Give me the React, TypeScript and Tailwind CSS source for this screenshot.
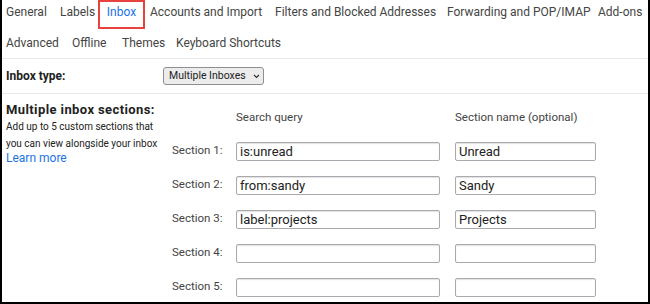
const tabsTop = [
  { t: "General", w: "w-[54px]" },
  { t: "Labels", w: "w-[38px]" },
  { t: "Inbox", w: "" },
  { t: "Accounts and Import", w: "w-[125px] ml-[5px]" },
  { t: "Filters and Blocked Addresses", w: "w-[172px]" },
  { t: "Forwarding and POP/IMAP", w: "w-[151px]" },
  { t: "Add-ons", w: "" },
];
const tabsBottom = [
  { t: "Advanced", w: "w-[66px]" },
  { t: "Offline", w: "w-[50px]" },
  { t: "Themes", w: "w-[54px]" },
  { t: "Keyboard Shortcuts", w: "" },
];

const sections = [
  { q: "is:unread", n: "Unread" },
  { q: "from:sandy", n: "Sandy" },
  { q: "label:projects", n: "Projects" },
  { q: "", n: "" },
  { q: "", n: "" },
];

function Field({ value, className }: { value: string; className: string }) {
  return (
    <div
      className={`h-[19px] border border-[#a9a9b0] rounded-[2px] shadow-[inset_0_1px_1px_rgba(0,0,0,0.12)] bg-white pl-[3px] text-[13px] leading-[17px] text-[#222] whitespace-nowrap ${className}`}
    >
      {value}
    </div>
  );
}

export default function App() {
  return (
    <div
      className="w-[650px] h-[304px] bg-white overflow-hidden border-l-2 border-r-2 border-b-2 border-black text-[#444]"
      style={{ fontFamily: "Roboto, 'Noto Sans', sans-serif" }}
    >
      <div className="flex items-center h-[24px] pl-[4px] text-[12px] whitespace-nowrap">
        {tabsTop.map(({ t, w }) =>
          t === "Inbox" ? (
            <div key={t} className="relative w-[47px] text-center text-[#1a73e8]">
              {t}
              <span className="absolute left-0 right-0 -top-[3px] -bottom-[8px] border-2 border-[#e8423f]" />
            </div>
          ) : (
            <div key={t} className={w}>
              {t}
            </div>
          )
        )}
      </div>
      <div className="flex items-center h-[30px] mt-[4px] pl-[4px] text-[12px] whitespace-nowrap">
        {tabsBottom.map(({ t, w }) => (
          <div key={t} className={w}>
            {t}
          </div>
        ))}
      </div>
      <div className="border-t border-[#e8e8e8] flex items-center h-[35px] pl-[4px]">
        <div className="w-[157px] font-bold text-[12px] text-[#222]">Inbox type:</div>
        <div className="h-[18px] w-[101px] pl-[5px] border border-[#8e8e93] rounded-[3px] bg-[#ececec] flex items-center gap-[7px] text-[10.5px] text-[#222] whitespace-nowrap">
          Multiple Inboxes
          <svg width="7" height="5" viewBox="0 0 7 5" fill="none" stroke="#333" strokeWidth="1.2">
            <path d="M1 1l2.5 2.5L6 1" />
          </svg>
        </div>
      </div>
      <div className="border-t border-[#e8e8e8] flex pl-[4px] pt-[8px]">
        <div className="w-[163px] text-[10px] leading-[17px] text-[#222] whitespace-nowrap">
          <div className="font-bold text-[13px] leading-[16px] tracking-[0.4px]">Multiple inbox sections:</div>
          <div>Add up to 5 custom sections that</div>
          <div>you can view alongside your inbox</div>
          <div className="text-[#1a73e8] text-[12px] leading-[14px] -mt-[1px]">Learn more</div>
        </div>
        <div className="flex flex-col text-[11.5px]">
          <div className="flex h-[32px] items-center">
            <div className="w-[67px]" />
            <div className="w-[219px]">Search query</div>
            <div>Section name (optional)</div>
          </div>
          {sections.map((s, i) => (
            <div key={i} className="flex items-center h-[34px]">
              <div className="w-[67px] pl-[3px]">Section {i + 1}:</div>
              <Field value={s.q} className="w-[204px]" />
              <div className="w-[15px]" />
              <Field value={s.n} className="w-[141px]" />
            </div>
          ))}
        </div>
      </div>
    </div>
  );
}
